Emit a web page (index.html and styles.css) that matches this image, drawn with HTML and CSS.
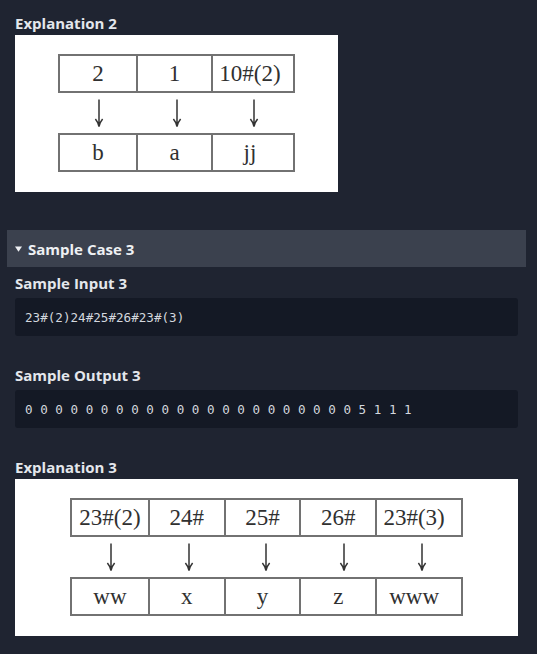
FILE: index.html
```html
<!DOCTYPE html>
<html lang="en">
<head>
<meta charset="utf-8">
<title>Sample Cases</title>
<link rel="stylesheet" href="styles.css">
</head>
<body>
<div class="page">
  <div class="case-body case-body-prev">
    <h4 class="label label-expl">Explanation 2</h4>
    <div class="figure figure-narrow">
      <div class="diagram">
        <div class="row row-3">
          <div class="cell">2</div><div class="cell">1</div><div class="cell">10#(2)</div>
        </div>
        <div class="arrows row-3">
          <div class="arrow"><svg width="10" height="28" viewBox="0 0 10 28"><path d="M5 0.5V27.3M1.4 20Q4.3 23.5 5 27.5Q5.7 23.5 8.6 20"/></svg></div>
          <div class="arrow"><svg width="10" height="28" viewBox="0 0 10 28"><path d="M5 0.5V27.3M1.4 20Q4.3 23.5 5 27.5Q5.7 23.5 8.6 20"/></svg></div>
          <div class="arrow"><svg width="10" height="28" viewBox="0 0 10 28"><path d="M5 0.5V27.3M1.4 20Q4.3 23.5 5 27.5Q5.7 23.5 8.6 20"/></svg></div>
        </div>
        <div class="row row-3">
          <div class="cell">b</div><div class="cell">a</div><div class="cell">jj</div>
        </div>
      </div>
    </div>
  </div>

  <section class="case">
    <div class="case-header">
      <svg class="caret" width="7" height="6" viewBox="0 0 7 6"><polygon points="0,0.5 7,0.5 3.5,5.8"/></svg>
      <span>Sample Case 3</span>
    </div>
    <div class="case-body">
      <h4 class="label">Sample Input 3</h4>
      <pre class="code">23#(2)24#25#26#23#(3)</pre>
      <h4 class="label">Sample Output 3</h4>
      <pre class="code">0 0 0 0 0 0 0 0 0 0 0 0 0 0 0 0 0 0 0 0 0 0 5 1 1 1</pre>
      <h4 class="label label-expl">Explanation 3</h4>
      <div class="figure">
        <div class="diagram">
          <div class="row row-5">
            <div class="cell">23#(2)</div><div class="cell">24#</div><div class="cell">25#</div><div class="cell">26#</div><div class="cell">23#(3)</div>
          </div>
          <div class="arrows row-5">
            <div class="arrow"><svg width="10" height="28" viewBox="0 0 10 28"><path d="M5 0.5V27.3M1.4 20Q4.3 23.5 5 27.5Q5.7 23.5 8.6 20"/></svg></div>
            <div class="arrow"><svg width="10" height="28" viewBox="0 0 10 28"><path d="M5 0.5V27.3M1.4 20Q4.3 23.5 5 27.5Q5.7 23.5 8.6 20"/></svg></div>
            <div class="arrow"><svg width="10" height="28" viewBox="0 0 10 28"><path d="M5 0.5V27.3M1.4 20Q4.3 23.5 5 27.5Q5.7 23.5 8.6 20"/></svg></div>
            <div class="arrow"><svg width="10" height="28" viewBox="0 0 10 28"><path d="M5 0.5V27.3M1.4 20Q4.3 23.5 5 27.5Q5.7 23.5 8.6 20"/></svg></div>
            <div class="arrow"><svg width="10" height="28" viewBox="0 0 10 28"><path d="M5 0.5V27.3M1.4 20Q4.3 23.5 5 27.5Q5.7 23.5 8.6 20"/></svg></div>
          </div>
          <div class="row row-5">
            <div class="cell">ww</div><div class="cell">x</div><div class="cell">y</div><div class="cell">z</div><div class="cell">www</div>
          </div>
        </div>
      </div>
    </div>
  </section>
</div>
</body>
</html>
```

FILE: styles.css
```css
html, body {
  margin: 0;
  padding: 0;
  background: #1f2431;
}

body {
  font-family: "Open Sans", "Noto Sans", sans-serif;
  color: #e4e7ec;
  height: 654px;
  overflow: hidden;
}

.page {
  padding: 13px 11px 0 7px;
}

.case-body {
  padding: 6px 8px 0 8px;
}

.case-body-prev {
  padding-top: 0;
}

.label {
  margin: 0 0 5px 0;
  font-size: 15px;
  line-height: 20px;
  font-weight: 700;
  color: #e4e7ec;
}

.label-expl {
  margin-bottom: 2px;
}

.code {
  margin: 0 0 29px 0;
  height: 38px;
  box-sizing: border-box;
  padding: 0 10px;
  display: flex;
  align-items: center;
  background: #141925;
  border-radius: 3px;
  font-family: "DejaVu Sans Mono", monospace;
  font-size: 12.6px;
  color: #d3d7de;
}

.figure {
  background: #ffffff;
  height: 157px;
  box-sizing: border-box;
  padding-top: 19px;
  display: flex;
  justify-content: center;
}

.figure-narrow {
  width: 323px;
  margin-bottom: 38px;
}

.diagram {
  display: flex;
  flex-direction: column;
}

.row {
  display: grid;
  border: 2px solid #727272;
  height: 39px;
  box-sizing: border-box;
}

.row-3 {
  grid-template-columns: repeat(3, 75.5px);
}

.row-5 {
  grid-template-columns: repeat(5, 75.8px);
}

.row .cell + .cell {
  border-left: 2px solid #727272;
}

.cell {
  display: flex;
  align-items: center;
  justify-content: center;
  font-family: "Liberation Serif", "Times New Roman", serif;
  font-size: 23px;
  color: #303030;
  white-space: nowrap;
}

.arrows {
  display: grid;
  height: 40px;
  padding: 0 2px;
  align-items: center;
}

.arrows.row-3 {
  grid-template-columns: repeat(3, 77.5px);
}

.arrows.row-5 {
  grid-template-columns: repeat(5, 77.8px);
}

.arrow {
  display: flex;
  justify-content: center;
}

.arrow svg {
  display: block;
}

.arrow path {
  fill: none;
  stroke: #333333;
  stroke-width: 1.5;
}

.case-header {
  height: 37px;
  background: #3b414e;
  display: flex;
  align-items: center;
  gap: 6px;
  padding-left: 8px;
  font-size: 15px;
  font-weight: 700;
  color: #eef0f3;
}

.caret {
  fill: #eef0f3;
  margin-top: 1px;
}
```
